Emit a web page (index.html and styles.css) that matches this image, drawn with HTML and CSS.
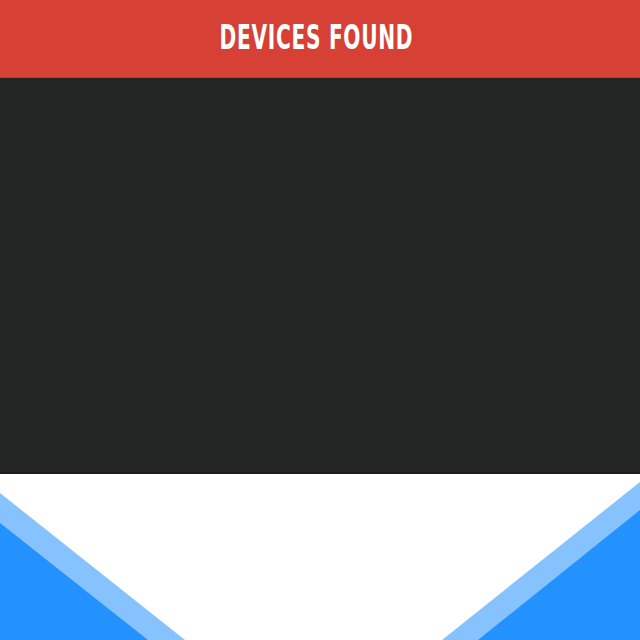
FILE: index.html
```html
<!DOCTYPE html>
<html>
<head>
<meta charset="utf-8">
<link rel="stylesheet" href="styles.css">
</head>
<body>
<div class="app">
  <header class="header"><h1 class="title">DEVICES FOUND</h1></header>
  <main class="list"></main>
  <footer class="footer">
    <svg class="deco" width="640" height="166" viewBox="0 0 640 166">
      <polygon points="0,19 185,166 0,166" fill="#86c2fe"/>
      <polygon points="0,49 148,166 0,166" fill="#2391fe"/>
      <polygon points="640,8 442,166 640,166" fill="#86c2fe"/>
      <polygon points="640,36 478,166 640,166" fill="#2391fe"/>
    </svg>
  </footer>
</div>
</body>
</html>
```
FILE: styles.css
```css
html, body { margin: 0; padding: 0; }
body { width: 640px; height: 640px; overflow: hidden; background: #fff; }
.app { display: flex; flex-direction: column; height: 640px; }
.header {
  height: 77px;
  padding: 0 7px 2px 0;
  box-sizing: border-box;
  height: 78px;
  background: #d64035;
  border-bottom: 1px solid #c2362c;
  display: flex;
  align-items: center;
  justify-content: center;
}
.title {
  margin: 0;
  color: #fff;
  font-family: "DejaVu Sans Condensed", "DejaVu Sans", sans-serif;
  font-stretch: condensed;
  font-weight: bold;
  font-size: 33px;
  line-height: 1;
  letter-spacing: 1px;
  transform: scaleX(0.68);
}
.list {
  height: 394px;
  background: #232525;
  border-bottom: 2px solid #1c1d1d;
}
.footer { flex: 1; background: #fff; }
.deco { display: block; }
```
